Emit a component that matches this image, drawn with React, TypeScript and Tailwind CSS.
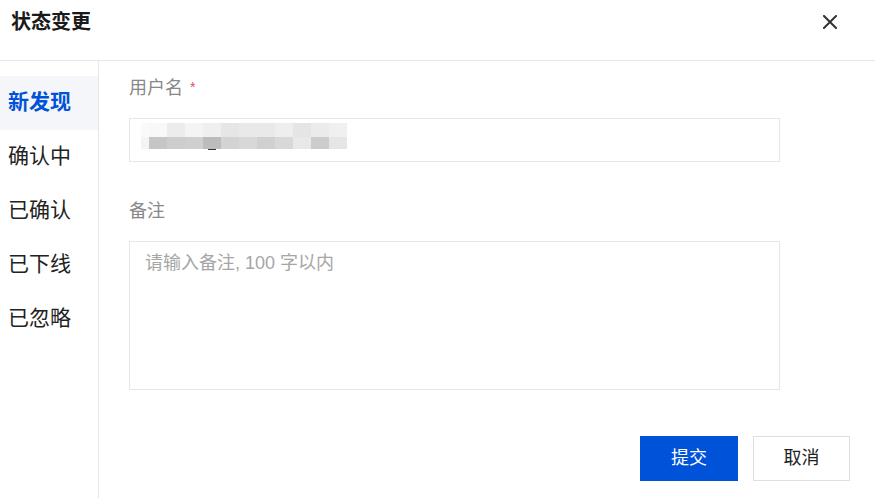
import React from "react";

const row1 = ["#fafafa", "#f8f8f8", "#ececec", "#f4f4f4", "#efefef", "#e6e6e6", "#e9e9e9", "#e9e9e9", "#eeeeee", "#e5e5e5", "#ebebeb", "#f0f0f0"];
const row2 = ["#f4f4f4", "#c6c6c6", "#cdcdcd", "#cfcfcf", "#bcbcbc", "#d3d3d3", "#d8d8d8", "#d0d0d0", "#d8d8d8", "#e8e8e8", "#cccccc", "#e6e6e6"];

function Blurred() {
  return (
    <div className="flex flex-col">
      <div className="flex">
        {row1.map((c, i) => (
          <div key={i} className={i === 0 ? "h-[14px] w-[8px]" : "h-[14px] w-[18px]"} style={{ backgroundColor: c }} />
        ))}
      </div>
      <div className="flex">
        {row2.map((c, i) => (
          <div key={i} className={i === 0 ? "h-[12px] w-[8px]" : "h-[12px] w-[18px]"} style={{ backgroundColor: c }} />
        ))}
      </div>
      <div className="ml-[67px] h-[1px] w-[8px] bg-[#333]" />
    </div>
  );
}

const items = ["新发现", "确认中", "已确认", "已下线", "已忽略"];

export default function App() {
  return (
    <div
      className="w-[875px] h-[498px] bg-white overflow-hidden flex flex-col"
      style={{ fontFamily: '"Liberation Sans", "Noto Sans CJK SC", sans-serif' }}
    >
      <div className="h-[61px] shrink-0 border-b border-[#e7e7e7] flex items-center justify-between pl-[11px] pr-[38px]">
        <div className="text-[20px] font-bold text-[#1a1a1a] leading-none -mt-[16px]">状态变更</div>
        <svg width="14" height="14" viewBox="0 0 14 14" className="-mt-[16px]">
          <path d="M1 1 L13 13 M13 1 L1 13" stroke="#333" strokeWidth="2" strokeLinecap="square" />
        </svg>
      </div>
      <div className="flex flex-1 min-h-0">
        <div className="w-[99px] shrink-0 border-r border-[#e7e7e7] pt-[15px]">
          {items.map((t, i) => (
            <div
              key={t}
              className={
                i === 0
                  ? "h-[54px] flex items-center pl-[8px] pb-[2px] text-[21px] font-bold text-[#0052d9] bg-[#f5f6fa]"
                  : "h-[54px] flex items-center pl-[8px] pb-[2px] text-[21px] text-[#222]"
              }
            >
              {t}
            </div>
          ))}
        </div>
        <div className="flex-1 pl-[30px] pt-[15px] pr-[25px]">
          <div className="h-[24px] flex items-center text-[18px] text-[#888] leading-[24px]">
            用户名<span className="ml-[7px] text-[#e34d59] text-[14px] leading-none -mt-[2px]">*</span>
          </div>
          <div className="mt-[18px] w-[651px] h-[44px] border border-[#e3e6eb] pl-[11px] pt-[4px]">
            <Blurred />
          </div>
          <div className="mt-[37px] h-[24px] flex items-center text-[18px] text-[#888] leading-[24px]">备注</div>
          <textarea
            className="mt-[18px] block w-[651px] h-[149px] border border-[#e3e6eb] resize-none outline-none pl-[15px] pt-[9px] text-[18px] leading-[24px] placeholder:text-[#a6a6a6]"
            placeholder="请输入备注, 100 字以内"
          />
          <div className="mt-[46px] flex justify-end gap-[15px]">
            <button className="w-[98px] h-[45px] bg-[#0052d9] text-white text-[18px] flex items-center justify-center">
              提交
            </button>
            <button className="w-[97px] h-[45px] bg-white border border-[#dcdfe6] text-[#222] text-[18px] flex items-center justify-center">
              取消
            </button>
          </div>
        </div>
      </div>
    </div>
  );
}
